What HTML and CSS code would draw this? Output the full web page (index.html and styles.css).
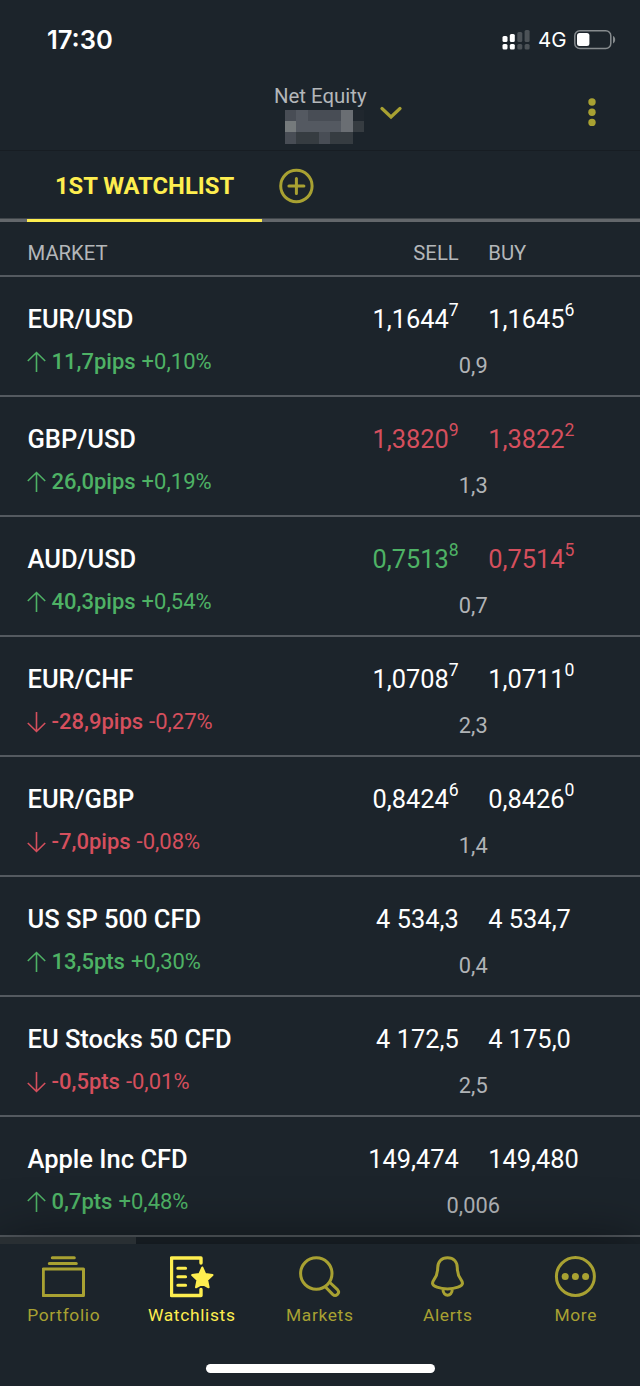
FILE: index.html
```html
<!DOCTYPE html>
<html lang="en">
<head>
    <meta charset="UTF-8">
    <meta name="viewport" content="width=device-width, initial-scale=1.0">
    <title>Watchlist</title>
    <link rel="stylesheet" href="styles.css">
</head>
<body>
    <div class="status">
        <span class="time">17:30</span>
        <svg class="signal" width="28" height="22" viewBox="0 0 28 22">
            <g fill="#fff">
                <rect x="0.500" y="7" width="5" height="6" rx="1.5"/>
                <rect x="7.800" y="5" width="5" height="8" rx="1.5"/>
                <rect x="0.500" y="15" width="5" height="5.5" rx="1.5"/>
                <rect x="7.800" y="15" width="5" height="5.5" rx="1.5"/>
            </g>
            <g fill="#4c5257">
                <rect x="15.300" y="3" width="5" height="10" rx="1.5"/>
                <rect x="22.600" y="1" width="5" height="12" rx="1.5"/>
                <rect x="15.300" y="15" width="5" height="5.5" rx="1.5"/>
                <rect x="22.600" y="15" width="5" height="5.5" rx="1.5"/>
            </g>
        </svg>
        <span class="net">4G</span>
        <svg class="battery" width="42" height="20" viewBox="0 0 42 20">
            <rect x="0.8" y="0.8" width="36" height="17.6" rx="5" fill="none" stroke="#868b8e" stroke-width="1.5"/>
            <rect x="3" y="3" width="12.4" height="13" rx="2.5" fill="#fff"/>
            <path d="M39 6v7.4c2.9-1.2 2.9-6.200 0-7.400z" fill="#868b8e"/>
        </svg>
    </div>

    <div class="header">
        <div class="equity">
            <span class="equityLabel">Net Equity</span>
            <div class="mosaic">
                <i class="c2"></i><i class="c3"></i><i class="c2"></i><i class="c2"></i><i class="c2"></i><i class="c4"></i><i class="c0"></i>
                <i class="c5"></i><i class="c3"></i><i class="c3"></i><i class="c3"></i><i class="c3"></i><i class="c4"></i><i class="c1"></i>
                <i class="c2"></i><i class="c1"></i><i class="c1"></i><i class="c2"></i><i class="c1"></i><i class="c1"></i><i></i>
            </div>
        </div>
        <svg class="chevron" width="22" height="14" viewBox="0 0 22 14">
            <path d="M2 2.500l9 8.500l9-8.500" fill="none" stroke="#a8a132" stroke-width="3.2" stroke-linecap="round"/>
        </svg>
        <svg class="dots" width="8" height="30" viewBox="0 0 8 30" fill="#a8a132">
            <circle cx="4" cy="4" r="3.7"/>
            <circle cx="4" cy="14.200" r="3.7"/>
            <circle cx="4" cy="24.400" r="3.7"/>
        </svg>
    </div>

    <div class="tabs">
        <div class="tab">1ST WATCHLIST</div>
        <svg class="add" width="36" height="36" viewBox="0 0 36 36" fill="none" stroke="#a8a132" stroke-width="3">
            <circle cx="18.400" cy="18" r="15.7"/>
            <path d="M10.900 18h15M18.400 10.500v15" stroke-linecap="round"/>
        </svg>
    </div>

    <div class="row head">
        <div class="market">MARKET</div>
        <div class="quote"><span class="sell">SELL</span><span class="buy">BUY</span></div>
    </div>

    <div class="list" id="list"></div>
    <div class="scroll"><div class="thumb"></div></div>

    <div class="nav">
        <div class="item">
            <svg class="icon" viewBox="0 0 44 42">
                <path d="M10.300 1.700h22M7.300 7.500h27" stroke-linecap="round"/>
                <rect x="1.300" y="13" width="40.200" height="26.500" stroke-linejoin="round"/>
            </svg>
            <span>Portfolio</span>
        </div>
        <div class="item active">
            <svg class="icon" viewBox="0 0 44 42">
                <path d="M31 7V2H1.500v37.500H31v-6" stroke-width="3.400" stroke-linecap="round" stroke-linejoin="round"/>
                <path d="M7.800 12.300h7.800M7.800 20.700h7.800M7.800 29.200h7.800" stroke-linecap="round"/>
                <path d="M32.300 11.500l3 6.600 7.200 1-5.300 5 1.400 7.200-6.300-3.500-6.300 3.500 1.400-7.200-5.300-5 7.200-1z" fill="#feee4f" stroke-width="2" stroke-linejoin="round"/>
            </svg>
            <span>Watchlists</span>
        </div>
        <div class="item">
            <svg class="icon" viewBox="0 0 44 42">
                <circle cx="18.300" cy="17.500" r="15.700"/>
                <path d="M27.500 31l7.200 7.400c3.200 3 7.800-1.500 4.800-4.700l-7.600-7.200" stroke-linejoin="round"/>
            </svg>
            <span>Markets</span>
        </div>
        <div class="item">
            <svg class="icon" viewBox="0 0 44 42">
                <path d="M21.500 1.700c-6 0-9.800 4-9.800 10 0 11-5.200 11.500-5.200 15.500 0 3 7 5.700 15 5.700s15-2.700 15-5.700c0-4-5.200-4.500-5.200-15.500 0-6-3.800-10-9.800-10z"/>
                <path d="M17 33.500c0 7.500 9.200 7.500 9.200 0"/>
            </svg>
            <span>Alerts</span>
        </div>
        <div class="item">
            <svg class="icon" viewBox="0 0 44 42">
                <circle cx="21.400" cy="20.500" r="19"/>
                <g fill="#a8a132" stroke="none">
                    <circle cx="11.200" cy="20.500" r="3.500"/>
                    <circle cx="21.400" cy="20.500" r="3.500"/>
                    <circle cx="31.600" cy="20.500" r="3.500"/>
                </g>
            </svg>
            <span>More</span>
        </div>
        <div class="homeBar"></div>
    </div>

    <script src="main.js"></script>
</body>
</html>
```
FILE: styles.css
```css
*{margin:0;padding:0;box-sizing:border-box;}
body{
    width: 640px;
    height: 1386px;
    overflow: hidden;
    background: #1c242b;
    color: #fff;
    font-family: Roboto, "Liberation Sans", sans-serif;
}
svg{display: block;flex: none;}
.status{
    display: flex;
    align-items: center;
    height: 80px;
    padding: 0 24px 0 47px;
}
.time{
    flex: 1;
    margin-top: -1px;
    font-family: Inter, sans-serif;
    font-size: 25.5px;
    font-weight: 600;
}
.net{
    width: 36px;
    margin-top: -1px;
    font-family: Inter, sans-serif;
    font-size: 20.5px;
}
.signal{margin-right: 8px;}
/* 顶部 */
.header{
    display: flex;
    height: 71px;
    padding: 4px 44px 0 274px;
    border-bottom: 1px solid #171d23;
}
.equity{width: 106px;}
.equityLabel{
    display: block;
    height: 26px;
    line-height: 24px;
    font-size: 20.4px;
    color: #b4b7ba;
    white-space: nowrap;
}
.mosaic{
    display: grid;
    grid-template-columns: repeat(7, 11.3px);
    grid-template-rows: repeat(3, 11.2px);
    margin-left: 11px;
}
.c0{background: #20272e;}
.c1{background: #363c41;}
.c2{background: #484d55;}
.c3{background: #545961;}
.c4{background: #6a6e73;}
.c5{background: #757a7c;}
.chevron{margin-top: 22px;}
.dots{margin: 14px 0 0 auto;}
/* 标签 */
.tabs{
    display: flex;
    height: 71px;
    padding-left: 27px;
    box-shadow: inset 0 -3.500px #63676b;
}
.tab{
    width: 235px;
    border-bottom: 3.500px solid #feee4f;
    line-height: 70px;
    text-align: center;
    font-size: 23.8px;
    font-weight: 700;
    color: #feee4f;
    white-space: nowrap;
}
.add{margin: 17px 0 0 16px;}
/* 列表 */
.row{
    display: flex;
    height: 120px;
    padding-left: 27.5px;
    border-bottom: 2px solid #545a60;
}
.market{width: 279px;}
.quote{
    display: grid;
    grid-template-columns: 1fr 1fr;
    grid-template-rows: 49px 26px;
    column-gap: 29px;
    flex: 1;
}
.head{
    height: 55px;
    line-height: 62px;
    font-size: 20.3px;
    color: #b4b7ba;
}
.sell{text-align: right;}
.buy{padding-left: 0.5px;}
.list .market,
.list .quote{padding-top: 27px;}
.name{
    height: 45px;
    line-height: 30px;
    font-size: 25.5px;
    font-weight: 500;
}
.change{
    display: flex;
    line-height: 26px;
    font-size: 22px;
}
.change b{
    margin: 0 6px 0 5.5px;
    font-weight: 500;
}
.arrow{
    width: 19px;
    height: 22px;
    margin: 2px 0 0 -0.5px;
    fill: none;
    stroke: currentColor;
    stroke-width: 1.6;
}
.price{
    line-height: 30px;
    font-size: 25.4px;
}
.price sup{
    position: relative;
    top: -12px;
    vertical-align: baseline;
    line-height: 0;
    font-size: 17.6px;
}
.spread{
    grid-column: 1 / 3;
    text-align: center;
    line-height: 26px;
    font-size: 21.8px;
    color: #b0b3b6;
}
.up{color: #4eb265;}
.down{color: #d54f5d;}
.scroll{
    height: 7px;
    background: #1c242b;
}
.thumb{
    position: relative;
    z-index: 2;
    width: 136px;
    height: 7px;
    background: #292f33;
}
/* 底部导航 */
.nav{
    position: relative;
    display: flex;
    height: 142px;
    padding-top: 12px;
    background: #1c242b;
    box-shadow: 0 4px 60px rgba(0,0,0,0.6);
}
.item{
    display: flex;
    flex-direction: column;
    align-items: center;
    width: 128px;
    font-size: 17.4px;
    letter-spacing: 0.65px;
    color: #a8a132;
}
.item span{
    margin: 6px 0 0 -0.5px;
    line-height: 22px;
}
.icon{
    width: 44px;
    height: 42px;
    fill: none;
    stroke: currentColor;
    stroke-width: 3;
}
.active{color: #feee4f;}
.homeBar{
    position: absolute;
    left: 206px;
    top: 119.5px;
    width: 229px;
    height: 9px;
    border-radius: 5px;
    background: #fff;
}
```
FILE: main.js
```javascript
// 名称, 点数, 百分比, 卖价, 买价, 点差, 卖价颜色, 买价颜色
var data = [
    ['EUR/USD', '11,7pips', '+0,10%', '1,1644^7', '1,1645^6', '0,9', '', ''],
    ['GBP/USD', '26,0pips', '+0,19%', '1,3820^9', '1,3822^2', '1,3', 'down', 'down'],
    ['AUD/USD', '40,3pips', '+0,54%', '0,7513^8', '0,7514^5', '0,7', 'up', 'down'],
    ['EUR/CHF', '-28,9pips', '-0,27%', '1,0708^7', '1,0711^0', '2,3', '', ''],
    ['EUR/GBP', '-7,0pips', '-0,08%', '0,8424^6', '0,8426^0', '1,4', '', ''],
    ['US SP 500 CFD', '13,5pts', '+0,30%', '4 534,3', '4 534,7', '0,4', '', ''],
    ['EU Stocks 50 CFD', '-0,5pts', '-0,01%', '4 172,5', '4 175,0', '2,5', '', ''],
    ['Apple Inc CFD', '0,7pts', '+0,48%', '149,474', '149,480', '0,006', '', '']
];
var arrows = {
    up: 'M9.500 21V1.500M0.800 10l8.700-8.500 8.700 8.500',
    down: 'M9.500 1v19.500M0.800 12l8.700 8.500 8.700-8.500'
};
var price = function(text) {
    return text.replace(/\^(\d)/, '<sup>$1</sup>');
};
var html = '';
for(var i=0; i<data.length; i++) {
    var d = data[i];
    var dir = d[1].charAt(0) == '-' ? 'down' : 'up';
    html += '<div class="row">' +
        '<div class="market"><div class="name">' + d[0] + '</div>' +
        '<div class="change ' + dir + '"><svg class="arrow" viewBox="0 0 19 22"><path d="' + arrows[dir] + '"/></svg>' +
        '<b>' + d[1] + '</b><span>' + d[2] + '</span></div></div>' +
        '<div class="quote"><div class="price sell ' + d[6] + '">' + price(d[3]) + '</div>' +
        '<div class="price buy ' + d[7] + '">' + price(d[4]) + '</div>' +
        '<div class="spread">' + d[5] + '</div></div></div>';
}
document.getElementById('list').innerHTML = html;
```
